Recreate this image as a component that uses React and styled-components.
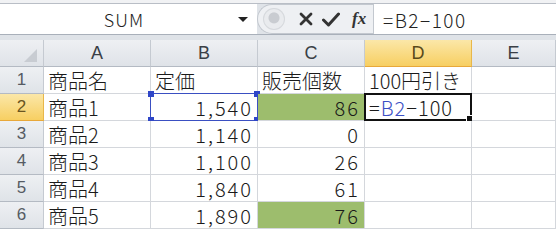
import React from 'react'
import styled, { createGlobalStyle } from 'styled-components'

const Global = createGlobalStyle`
  html, body { margin: 0; padding: 0; }
  body {
    width: 556px;
    height: 229px;
    overflow: hidden;
    background: #dfe3e8;
    font-family: "Noto Sans CJK JP", "Noto Sans", sans-serif;
  }
`

const Sheet = styled.div`
  display: flex;
  flex-direction: column;
  width: 556px;
  height: 229px;
  overflow: hidden;
`

const TopStrip = styled.div`
  height: 3px;
  background: #f1f2f4;
  border-bottom: 1px solid #b9bec6;
`

const FormulaBar = styled.div`
  display: flex;
  height: 33px;
  border-bottom: 1px solid #a9b0ba;
`

const NameBox = styled.div`
  width: 257px;
  background: #fff;
  display: flex;
  align-items: center;
  font-size: 18px;
  font-weight: 300;
  color: #222;
  letter-spacing: 1px;
`

const NameText = styled.span`
  flex: 1;
  text-align: center;
  padding-left: 10px;
`

const Caret = styled.span`
  width: 0;
  height: 0;
  border-left: 5px solid transparent;
  border-right: 5px solid transparent;
  border-top: 5px solid #222;
  margin-right: 9px;
`

const ButtonGroup = styled.div`
  width: 116px;
  display: flex;
  align-items: center;
  background: #eef0f3;
  border-radius: 17px 0 0 17px;
  border: 1px solid #c3c8cf;
  border-right: none;
  box-sizing: border-box;
`

const Knob = styled.div`
  width: 22px;
  height: 22px;
  border-radius: 50%;
  margin-left: 5px;
  background: radial-gradient(circle at 50% 45%, #c9ccd1 0 5px, #e9ebee 6px);
  box-shadow: inset 0 0 0 1px #d6d9dd;
`

const Icons = styled.div`
  display: flex;
  align-items: center;
  gap: 9px;
  margin-left: 14px;
`

const Fx = styled.span`
  font-family: "Liberation Serif", serif;
  font-style: italic;
  font-weight: bold;
  font-size: 17px;
  color: #333;
  margin-left: 3px;
`

const FormulaInput = styled.div`
  flex: 1;
  background: #fff;
  border-left: 1px solid #c3c8cf;
  display: flex;
  align-items: center;
  padding-left: 9px;
  font-size: 19px;
  font-weight: 300;
  color: #222;
  letter-spacing: 1.5px;
`

const Gap = styled.div`
  height: 5px;
  background: #dfe3e8;
`

const Grid = styled.div`
  display: grid;
  grid-template-columns: 44px 107px 107px 107px 107px 1fr;
  grid-template-rows: 27px repeat(6, 27px);
  background: #fff;
`

const Head = styled.div`
  display: flex;
  align-items: center;
  justify-content: center;
  font-family: "Liberation Sans", "Noto Sans CJK JP", sans-serif;
  font-size: 18px;
  color: ${p => (p.$active ? '#5a4a1a' : '#3a3f46')};
  background: ${p =>
    p.$active
      ? 'linear-gradient(#fbe7a8, #f7cf62)'
      : 'linear-gradient(#eef0f3, #dfe3e8)'};
  border-right: 1px solid ${p => (p.$active ? '#e8b74a' : '#c5cad1')};
  border-bottom: 1px solid ${p => (p.$active ? '#e8a83a' : '#b4bac3')};
  box-sizing: border-box;
  position: relative;
`

const RowHead = styled(Head)`
  color: ${p => (p.$active ? '#6a5520' : '#555b63')};
  font-size: 17px;
`

const Corner = styled(Head)`
  &::after {
    content: '';
    position: absolute;
    right: 6px;
    bottom: 4px;
    border-left: 13px solid transparent;
    border-bottom: 13px solid #c8ccd2;
  }
`

const Cell = styled.div`
  display: flex;
  align-items: center;
  justify-content: ${p => (p.$num ? 'flex-end' : 'flex-start')};
  padding: 0 4px 0 4px;
  font-size: 20px;
  font-weight: 300;
  color: #1a1a1a;
  letter-spacing: ${p => (p.$num ? '2px' : '0')};
  background: ${p => (p.$fill ? '#9dbd6d' : '#fff')};
  border-right: 1px solid #d4d7dc;
  border-bottom: 1px solid #d4d7dc;
  box-sizing: border-box;
  position: relative;
  white-space: nowrap;
  overflow: visible;
`

const RefCell = styled(Cell)`
  border: 1px solid #3a4fc2;
  margin: -1px 0 0 -1px;
`

const Handle = styled.span`
  position: absolute;
  width: 6px;
  height: 6px;
  background: #2f46c8;
  ${p => (p.$top ? 'top: -3px;' : 'bottom: -3px;')}
  ${p => (p.$left ? 'left: -3px;' : 'right: -3px;')}
`

const ActiveCell = styled(Cell)`
  border: 2px solid #111;
  margin: -1px 0 0 -1px;
  padding-left: 3px;
  letter-spacing: 1px;
`

const FillHandle = styled.span`
  position: absolute;
  right: -4px;
  bottom: -4px;
  width: 6px;
  height: 6px;
  background: #111;
  border: 1px solid #fff;
`

const Ref = styled.span`
  color: #3b4fc4;
`

const rows = [
  ['商品1', '1,540', '86', true],
  ['商品2', '1,140', '0', false],
  ['商品3', '1,100', '26', false],
  ['商品4', '1,840', '61', false],
  ['商品5', '1,890', '76', true],
]

function Cross() {
  return (
    <svg width="14" height="14" viewBox="0 0 14 14">
      <path d="M2 2 L12 12 M12 2 L2 12" stroke="#333" strokeWidth="2.8" strokeLinecap="round" />
    </svg>
  )
}

function Check() {
  return (
    <svg width="18" height="15" viewBox="0 0 18 15">
      <path d="M1.5 8 L6.5 13 L16.5 2" stroke="#333" strokeWidth="3" fill="none" strokeLinejoin="round" strokeLinecap="round" />
    </svg>
  )
}

export default function App() {
  return (
    <Sheet>
      <Global />
      <TopStrip />
      <FormulaBar>
        <NameBox>
          <NameText>SUM</NameText>
          <Caret />
        </NameBox>
        <ButtonGroup>
          <Knob />
          <Icons>
            <Cross />
            <Check />
            <Fx>fx</Fx>
          </Icons>
        </ButtonGroup>
        <FormulaInput>=B2−100</FormulaInput>
      </FormulaBar>
      <Gap />
      <Grid>
        <Corner />
        <Head>A</Head>
        <Head>B</Head>
        <Head>C</Head>
        <Head $active>D</Head>
        <Head>E</Head>

        <RowHead>1</RowHead>
        <Cell>商品名</Cell>
        <Cell>定価</Cell>
        <Cell>販売個数</Cell>
        <Cell>100円引き</Cell>
        <Cell />

        {rows.map(([name, price, qty, fill], i) => {
          const n = i + 2
          const first = n === 2
          return (
            <React.Fragment key={n}>
              <RowHead $active={first}>{n}</RowHead>
              <Cell>{name}</Cell>
              {first ? (
                <RefCell $num>
                  {price}
                  <Handle $top $left />
                  <Handle $top />
                  <Handle $left />
                  <Handle />
                </RefCell>
              ) : (
                <Cell $num>{price}</Cell>
              )}
              <Cell $num $fill={fill}>{qty}</Cell>
              {first ? (
                <ActiveCell>
                  =<Ref>B2</Ref>−100
                  <FillHandle />
                </ActiveCell>
              ) : (
                <Cell />
              )}
              <Cell />
            </React.Fragment>
          )
        })}
      </Grid>
    </Sheet>
  )
}
